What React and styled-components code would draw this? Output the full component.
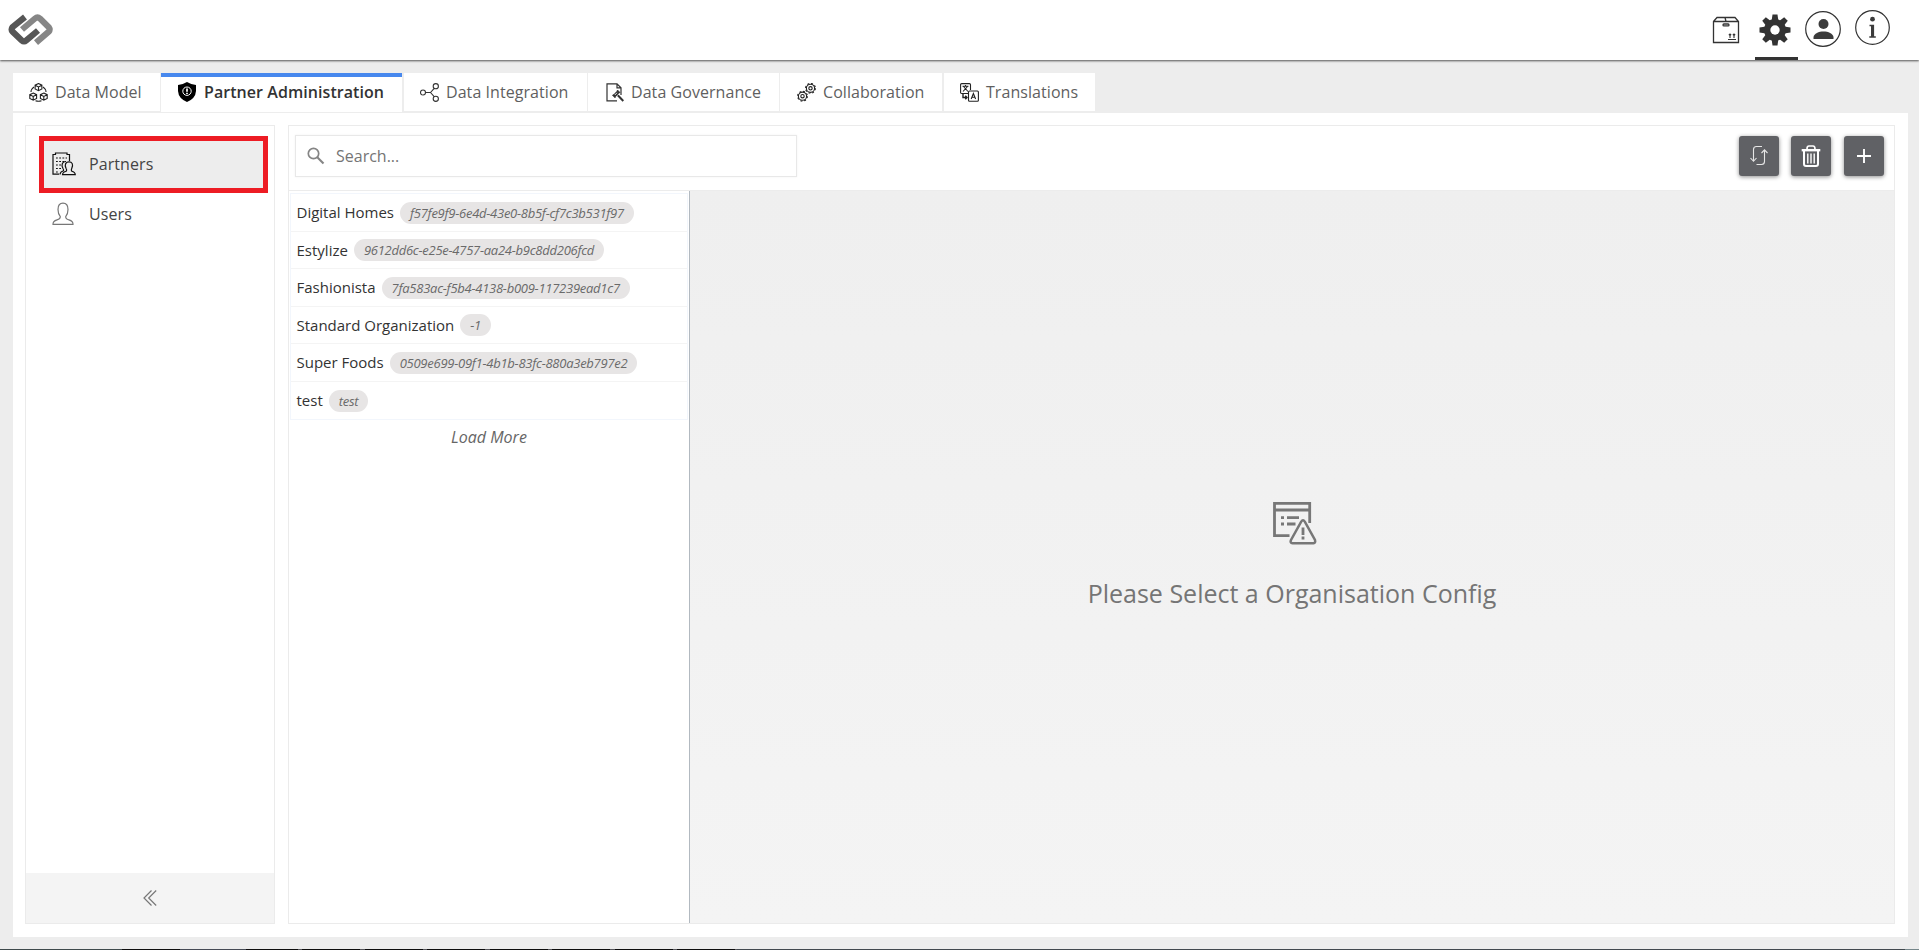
import { useState } from "react";
import styled, { createGlobalStyle } from "styled-components";

const GlobalStyle = createGlobalStyle`
  * {
    box-sizing: border-box;
  }

  body {
    margin: 0;
    background: #ededed;
    color: #333;
    font-family: "Open Sans", sans-serif;
    font-size: 16px;
    overflow: hidden;
  }

  button, input {
    font: inherit;
    border: none;
    background: none;
    padding: 0;
    margin: 0;
  }

  svg {
    display: block;
    flex: none;
  }
`;

const Page = styled.div`
  display: flex;
  flex-direction: column;
  height: 950px;
`;

const Header = styled.header`
  display: flex;
  align-items: flex-start;
  justify-content: space-between;
  height: 60px;
  flex: none;
  padding: 0 25px 0 8px;
  background: #fff;
  box-shadow: 0 1px 2px rgba(0, 0, 0, 0.65);
`;

const Logo = styled.a`
  padding-top: 14px;
`;

const HeaderNav = styled.nav`
  display: flex;
  gap: 5px;
`;

const HeaderButton = styled.button`
  display: flex;
  justify-content: center;
  align-items: flex-start;
  width: 43px;
  height: 60px;
  padding: ${(props) => props.$top}px ${(props) => props.$right || 0}px 0 0;
  border-bottom: 3px solid ${(props) => (props.$active ? "#333" : "transparent")};
`;

const Tabs = styled.div`
  display: flex;
  flex: none;
  height: 40px;
  margin: 13px 0 0 13px;
`;

const Tab = styled.button`
  display: flex;
  align-items: center;
  gap: ${(props) => props.$gap || 7}px;
  width: ${(props) => props.$width}px;
  height: ${(props) => (props.$active ? 39 : 38)}px;
  margin-right: ${(props) => props.$after}px;
  padding: 0 0 ${(props) => (props.$active ? 6 : 0)}px ${(props) => props.$left || 16}px;
  border-top: ${(props) => (props.$active ? "4px solid #4788ee" : "none")};
  background: #fff;
  color: ${(props) => (props.$active ? "#333" : "#5f5f5f")};
  font-weight: ${(props) => (props.$active ? 600 : 400)};
  letter-spacing: 0.06px;
  white-space: nowrap;
`;

const Content = styled.main`
  display: flex;
  gap: 13px;
  flex: none;
  height: 824px;
  margin: 0 11px 0 13px;
  padding: 12px 13px 13px 12px;
  background: #fff;
`;

const Sidebar = styled.aside`
  display: flex;
  flex-direction: column;
  width: 250px;
  padding: 10px 0 0;
  border: 1px solid #ebebeb;
`;

const SideItem = styled.button`
  display: flex;
  align-items: center;
  gap: ${(props) => (props.$active ? 13 : 15)}px;
  width: 229px;
  height: ${(props) => (props.$active ? 57 : 44)}px;
  margin-left: 13px;
  padding: 0 0 2px ${(props) => (props.$active ? 8 : 13)}px;
  border: ${(props) => (props.$active ? "5px solid #ed1c24" : "none")};
  background: ${(props) => (props.$active ? "#ededed" : "#fff")};
  color: #444;
  letter-spacing: 0.08px;
`;

const CollapseButton = styled.button`
  display: flex;
  align-items: center;
  justify-content: center;
  height: 50px;
  margin-top: auto;
  background: #f4f4f4;
`;

const Workspace = styled.section`
  display: flex;
  flex-direction: column;
  flex: 1;
  border: 1px solid #ebebeb;
`;

const Toolbar = styled.div`
  display: flex;
  align-items: flex-start;
  justify-content: space-between;
  height: 65px;
  padding: 9px 10px 0 6px;
  border-bottom: 1px solid #ececec;
`;

const SearchBox = styled.label`
  display: flex;
  align-items: center;
  gap: 11px;
  width: 502px;
  height: 42px;
  padding-left: 11px;
  border: 1px solid #e8e8e8;
  box-shadow: 0 0 2px rgba(0, 0, 0, 0.06);
`;

const SearchInput = styled.input`
  flex: 1;
  outline: none;
  color: #333;

  &::placeholder {
    color: #757575;
    opacity: 1;
  }
`;

const Actions = styled.div`
  display: grid;
  grid-template-columns: 52px 53px 40px;
  padding-top: 1px;
`;

const ActionButton = styled.button`
  display: flex;
  align-items: center;
  justify-content: center;
  width: 40px;
  height: 40px;
  border-radius: 3px;
  background: #606165;
  box-shadow: 0 1px 4px rgba(0, 0, 0, 0.45);
`;

const Split = styled.div`
  display: flex;
  flex: 1;
`;

const ListPane = styled.div`
  width: 401px;
  padding: 2px 1px 0;
  border-right: 1px solid #b2b9c0;
`;

const List = styled.ul`
  margin: 0;
  padding: 0;
  list-style: none;
  border: 1px solid #f2f6fc;
`;

const Row = styled.li`
  display: flex;
  align-items: center;
  gap: 6px;
  height: 37.5px;
  padding: 0 5.5px;
  color: #333;
  font-size: 15px;

  &:not(:last-child) {
    border-bottom: 1px solid #f4f4f4;
  }
`;

const Badge = styled.span`
  height: 22px;
  margin-top: 1px;
  padding: 0 10px;
  border-radius: 11px;
  background: #e7e5e5;
  color: #6a6a6a;
  font-size: 13px;
  font-style: italic;
  line-height: 22px;
  letter-spacing: -0.26px;
`;

const LoadMore = styled.button`
  display: block;
  width: 100%;
  padding-top: 6px;
  color: #666;
  font-style: italic;
`;

const EmptyPane = styled.div`
  display: flex;
  flex-direction: column;
  align-items: center;
  flex: 1;
  padding-top: 311px;
  background: linear-gradient(#efefef, #f4f4f4);
`;

const EmptyIconWrap = styled.div`
  padding-left: 6px;
`;

const EmptyText = styled.p`
  margin: 28px 0 0;
  color: #757575;
  font-size: 25px;
  line-height: 40px;
`;

const Strip = styled.div`
  height: 1px;
  margin-top: 12px;
  background: linear-gradient(
    90deg,
    #3f4a4c 0 122px,
    #0d0d0d 122px 180px,
    #454a54 180px 246px,
    transparent 246px 737px,
    #42494f 737px 1905px,
    #75868a 1905px
  ),
  repeating-linear-gradient(90deg, #0d0d0d 0 58px, #55555a 58px 62.5px) -10px 0;
`;

function LogoMark() {
  return (
    <svg width="45" height="31" viewBox="0 0 45 31" fill="none" strokeWidth="6.2">
      <path d="M17 3 L4.5 13.2 Q2.8 15.5 4.5 17.6 L13.8 26.4 Q16 28.4 18.3 26.4 L30 16.5" stroke="#565656" />
      <path d="M14 15.5 L27 4.5 Q29.5 2.4 32 4.5 L40.8 13.2 Q42.4 15.5 40.8 17.6 L28 28.6" stroke="#868686" />
    </svg>
  );
}

function BoxIcon() {
  return (
    <svg width="28" height="28" viewBox="0 0 28 28" fill="none" stroke="#333" strokeWidth="1.3">
      <path d="M1.5 5.5 L5 1.5 H23 L26.5 5.5 V26.5 H1.5 Z M1.5 5.5 H26.5 M13 1.5 L14 5.5" />
      <rect x="11" y="8" width="6" height="1.8" rx="0.9" />
      <path d="M16 23.5 H24 M18 22 V18 M22 22 V18 M16.8 19.2 L18 18 L19.2 19.2 M20.8 19.2 L22 18 L23.2 19.2" strokeWidth="1.1" />
    </svg>
  );
}

function GearIcon() {
  return (
    <svg width="32" height="32" viewBox="-16 -16 32 32" fill="#333">
      {[0, 45, 90, 135].map((angle) => (
        <path key={angle} transform={`rotate(${angle})`} d="M-2.5 -15.5 H2.5 L3.4 -9 V9 L2.5 15.5 H-2.5 L-3.4 9 V-9 Z" />
      ))}
      <circle r="11" />
      <circle r="4.7" fill="#fff" />
    </svg>
  );
}

function AccountIcon() {
  return (
    <svg width="36" height="36" viewBox="0 0 36 36">
      <circle cx="18" cy="18" r="17.3" fill="none" stroke="#333" strokeWidth="1.2" />
      <circle cx="18.5" cy="13" r="5" fill="#3b3b3b" />
      <path d="M8.5 28 V26 C9.5 18.5 27.5 18.5 28.5 26 V28 Z" fill="#3b3b3b" />
    </svg>
  );
}

function InfoIcon() {
  return (
    <svg width="35" height="35" viewBox="0 0 35 35">
      <circle cx="17.5" cy="17.5" r="16.8" fill="none" stroke="#333" strokeWidth="1.2" />
      <circle cx="17.5" cy="9.2" r="2.4" fill="#3b3b3b" />
      <path d="M14.5 14.8 H19.1 V26.3 H20.8 V27.7 H14.3 V26.3 H16 V16.2 H14.5 Z" fill="#3b3b3b" />
    </svg>
  );
}

function ModelIcon() {
  return (
    <svg width="19" height="19" viewBox="0 0 19 19" fill="none" stroke="#222" strokeWidth="1.1">
      {[[9.5, 4], [4.2, 13.5], [14.8, 13.5]].map(([x, y]) => (
        <path key={x} transform={`translate(${x} ${y})`} d="M0 -3.5 L3.4 -1.8 V1.9 L0 3.7 L-3.4 1.9 V-1.8 Z M-3.4 -1.8 L0 0 L3.4 -1.8 M0 0 V3.7" />
      ))}
      <path d="M5 4 Q2 6 2 9 M14 4 Q17 6 17 9 M6.5 17.8 Q9.5 18.8 12.5 17.8" />
    </svg>
  );
}

function ShieldIcon() {
  return (
    <svg width="18" height="20" viewBox="0 0 18 20">
      <path d="M9 0 Q13 2.5 18 3 V9 Q17.5 16.5 9 20 Q.5 16.5 0 9 V3 Q5 2.5 9 0 Z" fill="#000" />
      <circle cx="9" cy="9.2" r="4.2" fill="none" stroke="#fff" strokeWidth="1" />
      <path d="M9 6.5 V9.7 M9 10.8 V12" stroke="#fff" strokeWidth="1.7" />
    </svg>
  );
}

function NodesIcon() {
  return (
    <svg width="19" height="19" viewBox="0 0 19 19" fill="none" stroke="#333" strokeWidth="1.1">
      <circle cx="3" cy="9.5" r="2.5" />
      <circle cx="15.8" cy="3.2" r="2.6" />
      <circle cx="15.8" cy="15.8" r="2.6" />
      <path d="M5.5 9.5 H10.5 L14.2 5.3 M10.5 9.5 L14.2 13.7" />
    </svg>
  );
}

function GovernanceIcon() {
  return (
    <svg width="19" height="19" viewBox="0 0 19 19" fill="none" stroke="#333" strokeWidth="1.2">
      <path d="M11 17.8 H1 V.8 H11 L15 4.8 V12 M11 .8 V4.8 H15" />
      <path d="M6.5 12.2 L8 11.5 L11 8.3 L11.5 7 L14 9.5 L12.8 10 L9.8 13.3 L9 14.8 Z" fill="#333" strokeWidth="0.8" />
      <path d="M11.8 12.3 L17.3 18" strokeWidth="2" />
      <path d="M8.9 12 L11 9.8" stroke="#fff" strokeWidth="0.8" />
    </svg>
  );
}

function CogsIcon() {
  return (
    <svg width="19" height="19" viewBox="0 0 19 19" fill="none" stroke="#222">
      {[[13.5, 5.3], [5.5, 13.2]].map(([x, y]) => (
        <g key={x}>
          <circle cx={x} cy={y} r="4.1" strokeWidth="1.1" />
          <circle cx={x} cy={y} r="4.9" strokeWidth="1.1" strokeDasharray="1.9 1.95" />
          <circle cx={x} cy={y} r="1.7" strokeWidth="1.1" />
        </g>
      ))}
    </svg>
  );
}

function TranslateIcon() {
  return (
    <svg width="19" height="19" viewBox="0 0 19 19" fill="none" stroke="#222" strokeWidth="1.1">
      <path d="M8 10.5 H1.7 Q.6 10.5 .6 9.4 V1.7 Q.6 .6 1.7 .6 H9.4 Q10.5 .6 10.5 1.7 V7" />
      <path d="M2.5 3.2 H8.5 M5.5 2 V3.2 M3.5 3.5 L8 8.5 M7.5 3.5 L3 8.5" />
      <rect x="8.5" y="8" width="9.9" height="10.3" rx="1" />
      <path d="M11.2 16 L13.4 10.5 L15.6 16 M12 14.2 H14.8" />
      <path d="M3 11 V14.5 H7 M5.3 12.7 L7 14.5 L5.3 16.3" strokeWidth="1.4" />
    </svg>
  );
}

function PartnersIcon() {
  return (
    <svg width="24" height="24" viewBox="0 0 24 24" fill="none" stroke="#111" strokeWidth="1.2">
      <path d="M7 22.2 H1 V2.5 H3.5 V1 H15 V2.5 H17.5 V9" />
      <path d="M4 6 H15 M4 9.5 H12 M4 13 H10 M4 16.5 H9 M4 20 H7" strokeDasharray="1.8 1.4" />
      <path d="M8 22.5 Q8 20 11.5 18.8 Q12 18 11 16.5 C8.8 12.5 10.5 9.3 14 9.5" />
      <path d="M10.5 22.7 Q10.5 20.3 14.5 19 Q15 18 14 16.3 C12.3 12.5 13.8 9.8 17 9.8 C20.2 9.8 21.5 12.5 19.8 16.3 Q19 18 19.5 19 Q23.3 20.3 23.3 22.7 Z" />
    </svg>
  );
}

function UserIcon() {
  return (
    <svg width="22" height="24" viewBox="0 0 22 24" fill="none" stroke="#777" strokeWidth="1.2">
      <path d="M1 22.3 Q.8 19 5 17.8 Q8.5 17 8.3 14.6 Q6 12 6 7.5 C6 3 8 1.2 11 1.2 C14 1.2 16 3 16 7.5 Q16 12 13.7 14.6 Q13.5 17 17 17.8 Q21.2 19 21 22.3 Z" />
    </svg>
  );
}

function SearchIcon() {
  return (
    <svg width="18" height="18" viewBox="0 0 18 18" fill="none" stroke="#858585">
      <circle cx="6.5" cy="6.5" r="5.2" strokeWidth="1.7" />
      <path d="M10.3 10.3 L16.5 16.5" strokeWidth="2.1" />
    </svg>
  );
}

function SwapIcon() {
  return (
    <svg width="20" height="22" viewBox="0 0 20 22" fill="none" stroke="#e6e6e6" strokeWidth="1.1">
      <path d="M13 1.5 H7.5 Q4.5 1.5 4.5 4.5 V16 M1.5 13 L4.5 16.3 L7.5 13" />
      <path d="M7.5 19.5 H12.5 Q15.5 19.5 15.5 16.5 V5 M12.5 8 L15.5 4.8 L18.5 8" />
    </svg>
  );
}

function TrashIcon() {
  return (
    <svg width="20" height="24" viewBox="0 0 20 24" fill="none" stroke="#fff">
      <path d="M6 5 Q6 2 8 2 H12 Q14 2 14 5" strokeWidth="1.7" />
      <path d="M.7 6.2 H19.3" strokeWidth="2.4" />
      <path d="M3 7 V20 Q3 22 5 22 H15 Q17 22 17 20 V7" strokeWidth="2" />
      <path d="M6.8 9.5 V19.5 M10 9.5 V19.5 M13.2 9.5 V19.5" strokeWidth="1.4" />
    </svg>
  );
}

function PlusIcon() {
  return (
    <svg width="14" height="14" viewBox="0 0 14 14" stroke="#fff" strokeWidth="1.9">
      <path d="M7 0 V14 M0 7 H14" />
    </svg>
  );
}

function CollapseIcon() {
  return (
    <svg width="14" height="16" viewBox="0 0 14 16" fill="none" stroke="#777" strokeWidth="1.2">
      <path d="M8.5 .5 L1 8 L8.5 15.5 M13.2 .5 L5.7 8 L13.2 15.5" />
    </svg>
  );
}

function EmptyIcon() {
  return (
    <svg width="44" height="43" viewBox="0 0 44 43" fill="none" stroke="#777" strokeWidth="2.8">
      <path d="M16.5 33.7 H1.5 V1.3 H36.7 V21 M1.5 8 H36.7" />
      <path d="M8 15.7 H11 M14 15.7 H26 M8 22 H11 M14 22 H22.5" />
      <path d="M28.2 19.6 Q30 17 31.8 19.6 L42 38 Q42.8 41 40.5 41.2 H19.5 Q16.7 41 18 38 Z" strokeWidth="2.5" />
      <path d="M30 25.5 V33 M30 34.5 V37.5" />
    </svg>
  );
}

const tabs = [
  { name: "Data Model", icon: <ModelIcon />, width: 147, after: 1 },
  { name: "Partner Administration", icon: <ShieldIcon />, width: 241, after: 2, left: 17, gap: 8 },
  { name: "Data Integration", icon: <NodesIcon />, width: 183, after: 1 },
  { name: "Data Governance", icon: <GovernanceIcon />, width: 191, after: 1, left: 18, gap: 6 },
  { name: "Collaboration", icon: <CogsIcon />, width: 162, after: 2, left: 17 },
  { name: "Translations", icon: <TranslateIcon />, width: 151, after: 0 },
];

const partners = [
  { name: "Digital Homes", id: "f57fe9f9-6e4d-43e0-8b5f-cf7c3b531f97" },
  { name: "Estylize", id: "9612dd6c-e25e-4757-aa24-b9c8dd206fcd" },
  { name: "Fashionista", id: "7fa583ac-f5b4-4138-b009-117239ead1c7" },
  { name: "Standard Organization", id: "-1" },
  { name: "Super Foods", id: "0509e699-09f1-4b1b-83fc-880a3eb797e2" },
  { name: "test", id: "test" },
];

function App() {
  const [activeTab, setActiveTab] = useState("Partner Administration");
  const [section, setSection] = useState("Partners");

  return (
    <>
      <GlobalStyle />
      <Page>
        <Header>
          <Logo><LogoMark /></Logo>
          <HeaderNav>
            <HeaderButton $top={16} $right={5}><BoxIcon /></HeaderButton>
            <HeaderButton $top={13.5} $right={4} $active><GearIcon /></HeaderButton>
            <HeaderButton $top={11} $right={3}><AccountIcon /></HeaderButton>
            <HeaderButton $top={10}><InfoIcon /></HeaderButton>
          </HeaderNav>
        </Header>

        <Tabs>
          {tabs.map((tab) => (
            <Tab
              key={tab.name}
              $active={tab.name === activeTab}
              $width={tab.width}
              $after={tab.after}
              $left={tab.left}
              $gap={tab.gap}
              onClick={() => setActiveTab(tab.name)}
            >
              {tab.icon}
              {tab.name}
            </Tab>
          ))}
        </Tabs>

        <Content>
          <Sidebar>
            <SideItem $active={section === "Partners"} onClick={() => setSection("Partners")}>
              <PartnersIcon />
              Partners
            </SideItem>
            <SideItem $active={section === "Users"} onClick={() => setSection("Users")}>
              <UserIcon />
              Users
            </SideItem>
            <CollapseButton><CollapseIcon /></CollapseButton>
          </Sidebar>

          <Workspace>
            <Toolbar>
              <SearchBox>
                <SearchIcon />
                <SearchInput placeholder="Search..." />
              </SearchBox>
              <Actions>
                <ActionButton><SwapIcon /></ActionButton>
                <ActionButton><TrashIcon /></ActionButton>
                <ActionButton><PlusIcon /></ActionButton>
              </Actions>
            </Toolbar>

            <Split>
              <ListPane>
                <List>
                  {partners.map((partner) => (
                    <Row key={partner.id}>
                      {partner.name}
                      <Badge>{partner.id}</Badge>
                    </Row>
                  ))}
                </List>
                <LoadMore>Load More</LoadMore>
              </ListPane>
              <EmptyPane>
                <EmptyIconWrap><EmptyIcon /></EmptyIconWrap>
                <EmptyText>Please Select a Organisation Config</EmptyText>
              </EmptyPane>
            </Split>
          </Workspace>
        </Content>
        <Strip />
      </Page>
    </>
  );
}

export default App;
